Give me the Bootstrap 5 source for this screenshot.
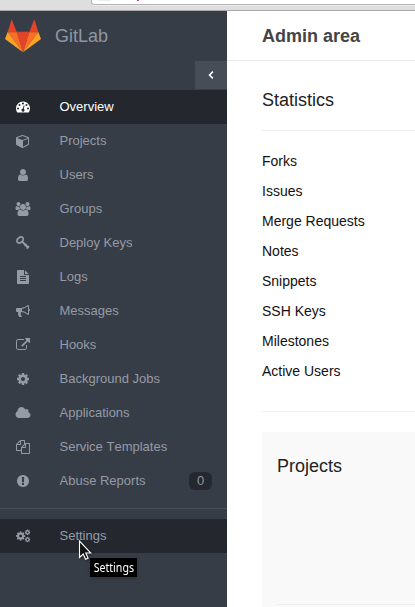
<!DOCTYPE html>
<html lang="en">
<head>
<meta charset="utf-8">
<meta name="viewport" content="width=device-width, initial-scale=1">
<title>Admin area · GitLab</title>
<link href="https://cdn.jsdelivr.net/npm/bootstrap@5.3.0/dist/css/bootstrap.min.css" rel="stylesheet">
<style>
body{font-family:"Liberation Sans",Arial,sans-serif;font-size:14px;line-height:20px;color:#222;height:607px}
.browser-strip{height:11px;background:#dedede;border-bottom:1px solid #a9a7a7}
.address-field{margin-left:91px;height:5px;background:#fff;border:1px solid #b5b3b3;border-width:0 0 1px 1px;border-bottom-left-radius:3px;box-shadow:0 1px #ececec}
.site-mark{width:12px;height:1px;background:#eee;margin-left:7px}
.site-dot{width:2px;height:1px;background:#b04080;margin-left:26px}
.sidebar{width:227px;background:#373d47}
.brand{height:50px;padding-left:5px;color:#8f96a3;font-size:18px}
.brand svg{width:36px;height:34px;margin-right:14px}
.collapse-toggle{width:32px;height:28px;margin-bottom:1px;background:#474d57;color:#fff}
.side-link,.side-link:hover{height:34px;padding:0 15px 0 16px;color:#959ba5;font-size:13px;line-height:20px;font-kerning:none}
.side-link svg{width:14px;height:14px;margin-right:29.5px;fill:currentColor;overflow:visible}
.side-link.current{background:#24272e;color:#fff}
.side-link.hovered{background:#24272e}
.count-pill{width:23px;height:18px;border-radius:6px;background:#25282f;color:#8f96a3;font-weight:400;font-size:13px;line-height:18px;padding:0}
.side-rule{height:1px;background:#494f59;margin:10px 0}
.page-title{height:50px;padding-left:35px;border-bottom:1px solid #eaeaea;font-size:18px;font-weight:700;color:#444}
.content{padding-left:35px}
.section-title{font-size:18px;line-height:20px;font-weight:400;margin:0;color:#222}
.stats-heading{padding:29px 0 20px;border-bottom:1px solid #eee}
.stats-list{padding:15px 0 25px;border-bottom:1px solid #eee;margin-bottom:20px;color:#111}
.stats-list li{height:30px;line-height:30px}
.well-box{background:#f9f9f9;padding:24px 0 0 15px}
.well-box .well-rule{height:1px;background:#eee;margin-bottom:2px}
.tip{left:90px;top:558px;width:47px;height:19px;background:#000;color:#fff;font:12px/19px "Noto Sans",sans-serif;box-shadow:0 2px 4px rgba(0,0,0,.15)}
.tip span{display:inline-block;transform:scaleX(.885);margin:0 -4px}
.pointer{left:78px;top:540px;filter:drop-shadow(1px 1px 1px rgba(0,0,0,.4))}
</style>
</head>
<body class="d-flex flex-column overflow-hidden position-relative bg-white">
<svg class="d-none">
 <symbol id="gear" viewBox="0 0 1792 1792"><path d="M1152 896q0-106-75-181t-181-75-181 75-75 181 75 181 181 75 181-75 75-181zm512-109v222q0 12-8 23t-20 13l-185 28q-19 54-39 91 35 50 107 138 10 12 10 25t-9 23q-27 37-99 108t-94 71q-12 0-26-9l-138-108q-44 23-91 38-16 136-29 186-7 28-36 28h-222q-14 0-24.5-8.5t-11.5-21.5l-28-184q-49-16-90-37l-141 107q-10 9-25 9-14 0-25-11-126-114-165-168-7-10-7-23 0-12 8-23 15-21 51-66.5t54-70.5q-27-50-41-99l-183-27q-13-2-21-12.5t-8-23.5v-222q0-12 8-23t19-13l186-28q14-46 39-92-40-57-107-138-10-12-10-24 0-10 9-23 26-36 98.5-107.5t94.5-71.5q13 0 26 10l138 107q44-23 91-38 16-136 29-186 7-28 36-28h222q14 0 24.5 8.5t11.5 21.5l28 184q49 16 90 37l142-107q9-9 24-9 13 0 25 10 129 119 165 170 7 8 7 22 0 12-8 23-15 21-51 66.5t-54 70.5q26 50 41 98l183 28q13 2 21 12.5t8 23.5z"/></symbol>
</svg>
<div class="browser-strip flex-shrink-0"><div class="address-field d-flex"><div class="site-mark"></div><div class="site-dot"></div></div></div>
<div class="d-flex flex-grow-1">
<nav class="sidebar flex-shrink-0 d-flex flex-column">
 <div class="brand d-flex align-items-center">
  <svg viewBox="0 0 108 100"><path fill="#e24329" d="M20 0L8 38h27zM88 0L73 38h27zM35 38h38L54 99z"/><path fill="#fc6d26" d="M8 38h27l19 61zM100 38H73L54 99z"/><path fill="#fca326" d="M8 38L0 59l54 40zM100 38l8 21-54 40z"/><path d="M8 38h92" stroke="#a9512e" stroke-width="2"/></svg>
  <span>GitLab</span>
 </div>
 <div class="collapse-toggle align-self-end d-flex align-items-center justify-content-center"><svg width="6" height="8" viewBox="0 0 6 8"><path d="M4.900.600L1.500 4l3.400 3.400" fill="none" stroke="#fff" stroke-width="1.500"/></svg></div>
 <a class="side-link current d-flex align-items-center text-decoration-none"><svg viewBox="0 0 14 14"><path fill-rule="evenodd" d="M7 1.500a7 7 0 0 0-7 7c0 1.400.4 2.600 1.100 3.700q.2.300.5.300h10.800q.3 0 .5-.3A7 7 0 0 0 7 1.500zM2 7.500a1 1 0 1 1 0 2 1 1 0 1 1 0-2zm1.500-3.500a1 1 0 1 1 0 2 1 1 0 1 1 0-2zM7 2.500a1 1 0 1 1 0 2 1 1 0 1 1 0-2zm3.500 1.500a1 1 0 1 1 0 2 1 1 0 1 1 0-2zM12 7.500a1 1 0 1 1 0 2 1 1 0 1 1 0-2zM7.700 5.400l.9.200-.8 3.200a1.500 1.500 0 1 1-.9-.2z"/></svg>Overview</a>
 <a class="side-link d-flex align-items-center text-decoration-none"><svg viewBox="0 0 1792 1792"><path d="M896 1629l640-349v-636l-640 233v752zm-64-865l698-254-698-254-698 254zm832-252v768q0 35-18 65t-49 47l-704 384q-28 16-61 16t-61-16l-704-384q-31-17-49-47t-18-65v-768q0-40 23-73t61-50l704-256q22-8 44-8t44 8l704 256q38 17 61 50t23 73z"/></svg>Projects</a>
 <a class="side-link d-flex align-items-center text-decoration-none"><svg viewBox="0 0 1792 1792"><path d="M1536 1399q0 109-62.500 187t-150.500 78h-854q-88 0-150.500-78t-62.500-187q0-85 8.500-160.500t31.500-152 58.500-131 94-89 134.500-34.500q131 128 313 128t313-128q76 0 134.500 34.500t94 89 58.500 131 31.500 152 8.500 160.500zm-256-887q0 159-112.500 271.500t-271.500 112.500-271.500-112.500-112.500-271.500 112.500-271.500 271.500-112.500 271.500 112.500 112.500 271.500z"/></svg>Users</a>
 <a class="side-link d-flex align-items-center text-decoration-none"><svg viewBox="0 0 1792 1792"><path d="M529 896q-162 5-265 128h-134q-82 0-138-40.500t-56-118.500q0-353 124-353 6 0 43.500 21t97.500 42.500 119 21.500q67 0 133-23-5 37-5 66 0 139 81 256zm1071 637q0 120-73 189.500t-194 69.500h-874q-121 0-194-69.500t-73-189.500q0-53 3.500-103.500t14-109 26.500-108.500 43-97.500 62-81 85.500-53.500 111.500-20q10 0 43 21.500t73 48 107 48 135 21.500 135-21.500 107-48 73-48 43-21.500q61 0 111.500 20t85.500 53.500 62 81 43 97.500 26.500 108.500 14 109 3.500 103.500zm-1024-1277q0 106-75 181t-181 75-181-75-75-181 75-181 181-75 181 75 75 181zm704 384q0 159-112.500 271.500t-271.500 112.500-271.500-112.500-112.500-271.500 112.500-271.500 271.500-112.500 271.500 112.500 112.500 271.500zm576 225q0 78-56 118.500t-138 40.500h-134q-103-123-265-128 81-117 81-256 0-29-5-66 66 23 133 23 59 0 119-21.500t97.500-42.500 43.500-21q124 0 124 353zm-128-609q0 106-75 181t-181 75-181-75-75-181 75-181 181-75 181 75 75 181z"/></svg>Groups</a>
 <a class="side-link d-flex align-items-center text-decoration-none"><svg viewBox="0 0 14 14"><g fill="none" stroke="currentColor"><ellipse cx="4.100" cy="4" rx="3.500" ry="2.500" transform="rotate(-35 4.100 4)" stroke-width="1.700"/><path d="M6 5.500l6.600 6.500M8.700 10.200l2-2M10.600 12.500l2.300-2.300" stroke-width="1.900"/></g></svg>Deploy Keys</a>
 <a class="side-link d-flex align-items-center text-decoration-none"><svg viewBox="0 0 1792 1792"><path d="M1596 476q14 14 28 36h-472v-472q22 14 36 28zm-476 164h544v1056q0 40-28 68t-68 28h-1344q-40 0-68-28t-28-68v-1600q0-40 28-68t68-28h800v544q0 40 28 68t68 28zm160 736v-64q0-14-9-23t-23-9h-704q-14 0-23 9t-9 23v64q0 14 9 23t23 9h704q14 0 23-9t9-23zm0-256v-64q0-14-9-23t-23-9h-704q-14 0-23 9t-9 23v64q0 14 9 23t23 9h704q14 0 23-9t9-23zm0-256v-64q0-14-9-23t-23-9h-704q-14 0-23 9t-9 23v64q0 14 9 23t23 9h704q14 0 23-9t9-23z"/></svg>Logs</a>
 <a class="side-link d-flex align-items-center text-decoration-none"><svg viewBox="0 0 1792 1792"><path d="M1664 640q53 0 90.500 37.500t37.500 90.500-37.500 90.500-90.500 37.500v384q0 52-38 90t-90 38q-417-347-812-380-58 19-91 66t-31 100.500 40 92.500q-20 33-23 65.500t6 58 33.500 55 48 50 61.500 50.500q-29 58-111.500 83t-168.500 11.500-132-55.500q-7-23-29.500-87.500t-32-94.500-23-89-15-101 3.500-98.500 22-110.500h-122q-66 0-113-47t-47-113v-192q0-66 47-113t113-47h480q435 0 896-384 52 0 90 38t38 90v384zm-128 604v-954q-394 302-768 343v270q377 42 768 341z"/></svg>Messages</a>
 <a class="side-link d-flex align-items-center text-decoration-none"><svg viewBox="0 0 1792 1792"><path d="M1408 928v320q0 119-84.500 203.500t-203.500 84.500h-832q-119 0-203.500-84.500t-84.500-203.500v-832q0-119 84.500-203.500t203.500-84.500h704q14 0 23 9t9 23v64q0 14-9 23t-23 9h-704q-66 0-113 47t-47 113v832q0 66 47 113t113 47h832q66 0 113-47t47-113v-320q0-14 9-23t23-9h64q14 0 23 9t9 23zm384-864v512q0 26-19 45t-45 19-45-19l-176-176-652 652q-10 10-23 10t-23-10l-114-114q-10-10-10-23t10-23l652-652-176-176q-19-19-19-45t19-45 45-19h512q26 0 45 19t19 45z"/></svg>Hooks</a>
 <a class="side-link d-flex align-items-center text-decoration-none"><svg><use href="#gear" width="14" height="14"/></svg>Background Jobs</a>
 <a class="side-link d-flex align-items-center text-decoration-none"><svg viewBox="128 0 1792 1792"><path d="M1984 1152q0 159-112.500 271.500t-271.500 112.500h-1088q-185 0-316.500-131.500t-131.500-316.500q0-132 71-241.500t187-163.500q-2-28-2-43 0-212 150-362t362-150q158 0 286.500 88t187.500 230q70-62 166-62 106 0 181 75t75 181q0 75-41 138 129 30 213 134.500t84 239.500z"/></svg>Applications</a>
 <a class="side-link d-flex align-items-center text-decoration-none"><svg viewBox="0 0 1792 1792"><path d="M1696 384q40 0 68 28t28 68v1216q0 40-28 68t-68 28h-960q-40 0-68-28t-28-68v-288h-544q-40 0-68-28t-28-68v-672q0-40 20-88t48-76l408-408q28-28 76-48t88-20h416q40 0 68 28t28 68v328q68-40 128-40h416zm-544 213l-299 299h299v-299zm-640-384l-299 299h299v-299zm196 647l316-316v-416h-384v416q0 40-28 68t-68 28h-416v640h512v-256q0-40 20-88t48-76zm956 804v-1152h-384v416q0 40-28 68t-68 28h-416v640h896z"/></svg>Service Templates</a>
 <a class="side-link d-flex align-items-center text-decoration-none"><svg viewBox="0 0 1792 1792"><path d="M896 128q209 0 385.500 103t279.500 279.500 103 385.500-103 385.500-279.500 279.500-385.500 103-385.500-103-279.500-279.500-103-385.500 103-385.500 279.500-279.500 385.500-103zm128 1247v-190q0-14-9-23.500t-22-9.500h-192q-13 0-23 10t-10 23v190q0 13 10 23t23 10h192q13 0 22-9.500t9-23.500zm-2-344l18-621q0-12-10-18-10-8-24-8h-220q-14 0-24 8-10 6-10 18l17 621q0 10 10 17.500t24 7.500h185q14 0 23.500-7.500t10.500-17.500z"/></svg>Abuse Reports<span class="badge count-pill ms-auto">0</span></a>
 <div class="side-rule"></div>
 <a class="side-link hovered d-flex align-items-center text-decoration-none"><svg><use href="#gear" x="-.7" y="1.700" width="10.600" height="10.600"/><use href="#gear" x="8.300" y=".1" width="6.400" height="6.400"/><use href="#gear" x="8.300" y="7.300" width="6.400" height="6.400"/></svg>Settings</a>
</nav>
<main class="flex-grow-1 d-flex flex-column">
 <div class="page-title d-flex align-items-center">Admin area</div>
 <div class="content flex-grow-1 d-flex flex-column">
  <div class="stats-heading"><h4 class="section-title">Statistics</h4></div>
  <ul class="stats-list list-unstyled">
   <li>Forks</li><li>Issues</li><li>Merge Requests</li><li>Notes</li><li>Snippets</li><li>SSH Keys</li><li>Milestones</li><li>Active Users</li>
  </ul>
  <section class="well-box flex-grow-1 d-flex flex-column"><h4 class="section-title">Projects</h4><div class="well-rule mt-auto"></div></section>
 </div>
</main>
</div>
<div class="tip position-absolute text-center"><span>Settings</span></div>
<svg class="pointer position-absolute" width="14" height="21" viewBox="0 0 14 21"><path d="M1.500 1v16.500l3.700-3.500 2.400 5.300 2.500-1.100-2.300-5.200h5z" fill="#111" stroke="#fff" stroke-width="1.100"/></svg>
<script src="https://cdn.jsdelivr.net/npm/bootstrap@5.3.0/dist/js/bootstrap.bundle.min.js"></script>
</body>
</html>
